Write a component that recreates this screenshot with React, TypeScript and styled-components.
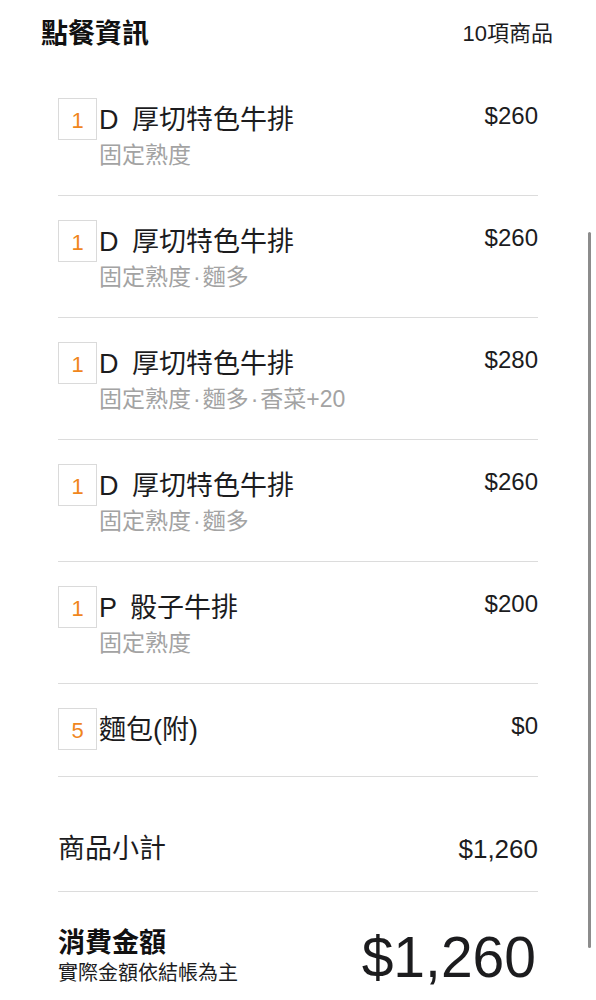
import React from 'react';
import styled, { createGlobalStyle } from 'styled-components';

type OrderItem = {
	qty: number;
	name: string;
	options?: string[];
	price: number;
};

const items: OrderItem[] = [
	{ qty: 1, name: 'D 厚切特色牛排', options: ['固定熟度'], price: 260 },
	{ qty: 1, name: 'D 厚切特色牛排', options: ['固定熟度', '麵多'], price: 260 },
	{ qty: 1, name: 'D 厚切特色牛排', options: ['固定熟度', '麵多', '香菜+20'], price: 280 },
	{ qty: 1, name: 'D 厚切特色牛排', options: ['固定熟度', '麵多'], price: 260 },
	{ qty: 1, name: 'P 骰子牛排', options: ['固定熟度'], price: 200 },
	{ qty: 5, name: '麵包(附)', price: 0 },
];

const money = (n: number) => '$' + n.toLocaleString('en-US');

const GlobalStyle = createGlobalStyle`
	html, body {
		margin: 0;
		padding: 0;
		background: #ffffff;
	}
	body {
		font-family: 'Liberation Sans', 'Noto Sans CJK TC', sans-serif;
		color: #1c1c1e;
	}
`;

export default function App() {
	const total = items.reduce((sum, it) => sum + it.price, 0);
	const count = items.reduce((sum, it) => sum + it.qty, 0);
	return (
		<Page>
			<GlobalStyle />
			<Header>
				<Title>點餐資訊</Title>
				<Count>{count}項商品</Count>
			</Header>
			<List>
				{items.map((it, i) => (
					<Row key={i} $compact={!it.options}>
						<Qty>{it.qty}</Qty>
						<Body>
							<NameLine>
								<Name>{it.name}</Name>
								<Price>{money(it.price)}</Price>
							</NameLine>
							{it.options && (
								<Options>
									{it.options.map((o, j) => (
										<React.Fragment key={j}>
											{j > 0 && <Dot>·</Dot>}
											{o}
										</React.Fragment>
									))}
								</Options>
							)}
						</Body>
					</Row>
				))}
				<Subtotal>
					<span>商品小計</span>
					<span>{money(total)}</span>
				</Subtotal>
				<Total>
					<TotalLabel>
						<strong>消費金額</strong>
						<small>實際金額依結帳為主</small>
					</TotalLabel>
					<TotalAmount>{money(total)}</TotalAmount>
				</Total>
			</List>
			<ScrollThumb />
		</Page>
	);
}

const Page = styled.div`
	position: relative;
	width: 596px;
	height: 1000px;
	overflow: hidden;
	background: #fff;
`;

const Header = styled.div`
	height: 68px;
	display: flex;
	align-items: center;
	justify-content: space-between;
	padding: 0 43px 0 41px;
`;

const Title = styled.h1`
	margin: 0;
	font-size: 27px;
	font-weight: 700;
	line-height: 36px;
	color: #111;
`;

const Count = styled.span`
	font-size: 22px;
	line-height: 36px;
	color: #1c1c1e;
`;

const List = styled.div`
	padding: 6px 58px 0;
`;

const Row = styled.div<{ $compact?: boolean }>`
	display: flex;
	align-items: flex-start;
	padding: 24px 0 ${p => (p.$compact ? '26px' : '21px')};
	border-bottom: 1px solid #dcdcdc;
`;

const Qty = styled.div`
	flex: none;
	box-sizing: border-box;
	width: 39px;
	height: 42px;
	border: 1px solid #dadada;
	display: flex;
	align-items: center;
	justify-content: center;
	font-size: 22px;
	color: #f0861d;
	padding-top: 4px;
`;

const Body = styled.div`
	flex: 1;
	min-width: 0;
	margin-left: 2px;
`;

const NameLine = styled.div`
	display: flex;
	justify-content: space-between;
	align-items: center;
	height: 38px;
`;

const Name = styled.span`
	font-size: 27px;
	color: #1c1c1e;
	word-spacing: 6px;
`;

const Price = styled.span`
	font-size: 24px;
	color: #1c1c1e;
	margin-top: -3px;
`;

const Options = styled.div`
	font-size: 23px;
	line-height: 38px;
	color: #a3a3a3;
`;

const Dot = styled.span`
	margin: 0 2px;
`;

const Subtotal = styled.div`
	display: flex;
	justify-content: space-between;
	align-items: center;
	padding: 54px 0 24px;
	line-height: 36px;
	font-size: 27px;
	color: #1c1c1e;
	border-bottom: 1px solid #dcdcdc;
	span:last-child {
		font-size: 26px;
	}
`;

const Total = styled.div`
	display: flex;
	justify-content: space-between;
	align-items: center;
	padding-top: 33px;
`;

const TotalLabel = styled.div`
	display: flex;
	flex-direction: column;
	strong {
		font-size: 27px;
		line-height: 34px;
		font-weight: 700;
		color: #111;
	}
	small {
		font-size: 20px;
		line-height: 26px;
		color: #1c1c1e;
	}
`;

const TotalAmount = styled.span`
	font-size: 57px;
	line-height: 60px;
	color: #1c1c1e;
	margin-top: 2px;
	margin-right: 2px;
`;

const ScrollThumb = styled.div`
	position: absolute;
	top: 232px;
	right: 5px;
	width: 3px;
	height: 716px;
	border-radius: 2px;
	background: #8c8c8c;
`;
